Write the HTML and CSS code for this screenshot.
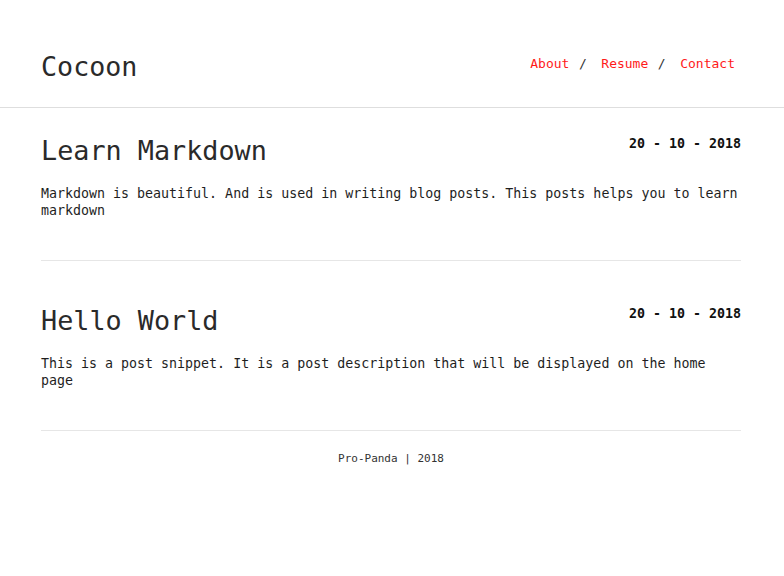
FILE: index.html
```html
<!DOCTYPE html>
<html lang="en">
<head>
<meta charset="utf-8">
<title>Cocoon</title>
<link rel="stylesheet" href="styles.css">
</head>
<body>
<header class="site-header">
  <div class="header-inner">
    <a class="brand" href="#">Cocoon</a>
    <nav class="nav">
      <a class="nav-link" href="#">About</a><span class="sep">/</span><a class="nav-link" href="#">Resume</a><span class="sep">/</span><a class="nav-link" href="#">Contact</a>
    </nav>
  </div>
</header>
<main class="container">
  <article class="post">
    <div class="post-head">
      <h2 class="post-title">Learn Markdown</h2>
      <span class="post-date">20 - 10 - 2018</span>
    </div>
    <p class="post-text">Markdown is beautiful. And is used in writing blog posts. This posts helps you to learn markdown</p>
  </article>
  <article class="post">
    <div class="post-head">
      <h2 class="post-title">Hello World</h2>
      <span class="post-date">20 - 10 - 2018</span>
    </div>
    <p class="post-text">This is a post snippet. It is a post description that will be displayed on the home page</p>
  </article>
  <footer class="site-footer">Pro-Panda | 2018</footer>
</main>
</body>
</html>
```

FILE: styles.css
```css
* { box-sizing: border-box; }
body {
  margin: 0;
  font-family: "DejaVu Sans Mono", "Liberation Mono", monospace;
  color: #222;
  background: #fff;
}
a { text-decoration: none; }
.site-header {
  border-bottom: 1px solid #dedede;
}
.header-inner {
  width: 700px;
  margin: 0 0 0 41px;
  height: 107px;
  display: flex;
  align-items: center;
  justify-content: space-between;
  padding-top: 26px;
}
.brand {
  font-size: 26.7px;
  color: #2a2a2a;
  line-height: 32px;
}
.nav {
  font-size: 13px;
  line-height: 17px;
  padding-right: 6px;
  margin-top: -7px;
}
.nav-link { color: #ff1a1a; }
.sep {
  color: #333;
  margin: 0 14.6px 0 9.5px;
}
.container {
  width: 700px;
  margin: 0 0 0 41px;
}
.post {
  padding: 44px 0 41px;
  border-bottom: 1px solid #e6e6e6;
}
.post:first-child { padding-top: 27px; }
.post-head {
  display: flex;
  justify-content: space-between;
  align-items: flex-start;
}
.post-title {
  margin: 0;
  font-size: 26.8px;
  font-weight: normal;
  line-height: 32px;
  color: #2a2a2a;
}
.post-date {
  font-size: 13.3px;
  line-height: 17px;
  font-weight: bold;
  color: #111;
}
.post-text {
  margin: 18px 0 0;
  font-size: 13.3px;
  line-height: 17px;
  color: #1e1e1e;
}
.site-footer {
  text-align: center;
  font-size: 11px;
  line-height: 15px;
  padding-top: 20px;
  color: #333;
}
```
